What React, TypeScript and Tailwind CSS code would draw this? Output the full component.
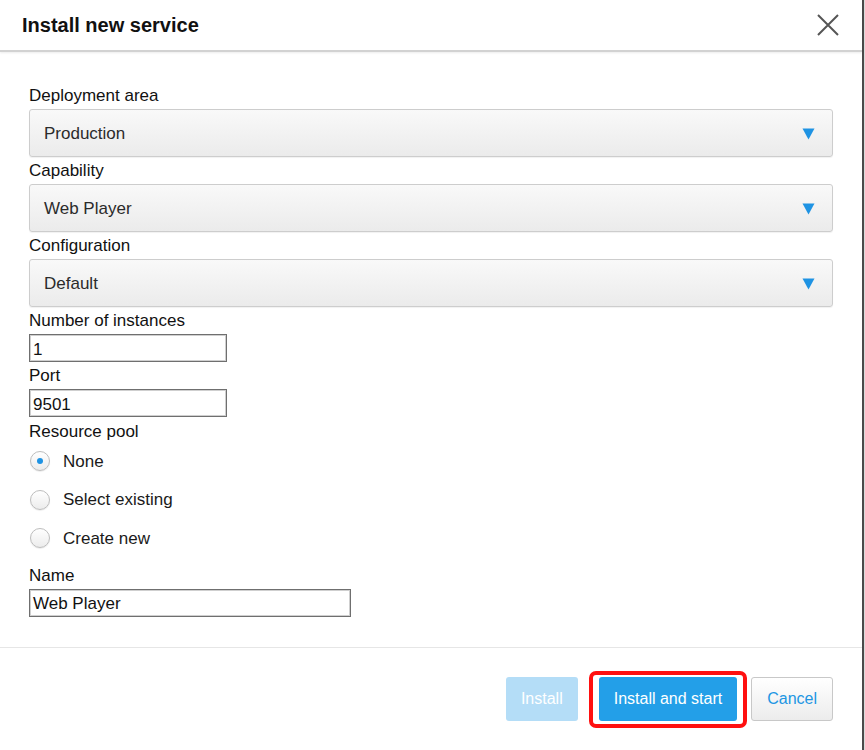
import React from "react";

const font = "font-['Liberation_Sans',Arial,sans-serif]";

function Select({ value }: { value: string }) {
  return (
    <div className="mt-[3px] mb-[4px] flex h-[48px] items-center justify-between rounded-[3px] border border-[#cdcdcd] bg-gradient-to-b from-[#f9f9f9] to-[#ebebeb] pl-[14px] pr-[17px] shadow-[0_1px_1px_rgba(0,0,0,0.06)]">
      <span className="pt-[2px] text-[17px] text-[#2b2b2b]">{value}</span>
      <svg width="13" height="12" viewBox="0 0 13 12" className="mt-[1px]">
        <path d="M0.5 0.5 H12.5 L6.5 11.5 Z" fill="#1f93e3" />
      </svg>
    </div>
  );
}

function TextInput({ value, width }: { value: string; width: string }) {
  return (
    <div
      className={`mt-[3px] flex h-[28px] items-center border border-[#6f6f6f] bg-white pl-[3px] pt-[3px] text-[17px] text-[#111] shadow-[inset_0_0_0_1px_#cfcfcf] ${width}`}
    >
      {value}
    </div>
  );
}

function Radio({ label, checked }: { label: string; checked?: boolean }) {
  return (
    <div className="flex h-[38.5px] items-center gap-[13px] pl-[1px]">
      <span className="flex h-[20px] w-[20px] items-center justify-center rounded-full border border-[#bdbdbd] bg-gradient-to-b from-white to-[#ececec] shadow-[0_1px_1px_rgba(0,0,0,0.08)]">
        {checked && <span className="h-[6px] w-[6px] rounded-full bg-[#1f93e3]" />}
      </span>
      <span className="text-[17px] text-[#1a1a1a]">{label}</span>
    </div>
  );
}

function Label({ children }: { children: React.ReactNode }) {
  return <div className="h-[20px] text-[17px] leading-[20px] text-[#111]">{children}</div>;
}

export default function App() {
  return (
    <div className={`h-[750px] w-[865px] bg-[#dadada] ${font}`}>
      <div className="flex h-full w-[864px] flex-col border-r-2 border-[#4a4a4a] bg-white">
        {/* Header */}
        <div className="flex h-[52px] shrink-0 items-center justify-between border-b-2 border-[#d2d2d2] pl-[22px] pr-[22px] shadow-[0_1px_2px_rgba(0,0,0,0.08)]">
          <h1 className="text-[20px] font-bold text-[#111]">Install new service</h1>
          <svg width="24" height="24" viewBox="0 0 24 24" className="mt-[-1px]">
            <path d="M2 2 L22 22 M22 2 L2 22" stroke="#555" strokeWidth="2" fill="none" />
          </svg>
        </div>

        {/* Body */}
        <div className="flex-1 px-[29px] pt-[34px]">
          <Label>Deployment area</Label>
          <Select value="Production" />
          <Label>Capability</Label>
          <Select value="Web Player" />
          <Label>Configuration</Label>
          <Select value="Default" />
          <div className="mt-[3px]">
            <Label>Number of instances</Label>
          </div>
          <TextInput value="1" width="w-[198px]" />
          <div className="mt-[4px]">
            <Label>Port</Label>
          </div>
          <TextInput value="9501" width="w-[198px]" />
          <div className="mt-[5px]">
            <Label>Resource pool</Label>
          </div>
          <Radio label="None" checked />
          <Radio label="Select existing" />
          <Radio label="Create new" />
          <div className="mt-[8px]">
            <Label>Name</Label>
          </div>
          <TextInput value="Web Player" width="w-[322px]" />
        </div>

        {/* Footer */}
        <div className="flex shrink-0 justify-end border-t border-[#e6e6e6] pt-[29px] pb-[29px] pr-[29px]">
          <button className="h-[44px] rounded-[3px] bg-[#b4ddf7] px-[15px] text-[16px] text-white">
            Install
          </button>
          <div className="relative ml-[21px]">
            <button className="h-[44px] rounded-[3px] bg-[#239fe8] px-[15px] text-[16px] text-white">
              Install and start
            </button>
            <div className="pointer-events-none absolute -top-[6px] -bottom-[7px] -left-[10px] -right-[10px] rounded-[7px] border-[4px] border-[#ff1010]" />
          </div>
          <button className="ml-[14px] h-[44px] rounded-[3px] border border-[#c8c8c8] bg-gradient-to-b from-white to-[#ececec] px-[15px] text-[16px] text-[#2196e3]">
            Cancel
          </button>
        </div>
      </div>
    </div>
  );
}
